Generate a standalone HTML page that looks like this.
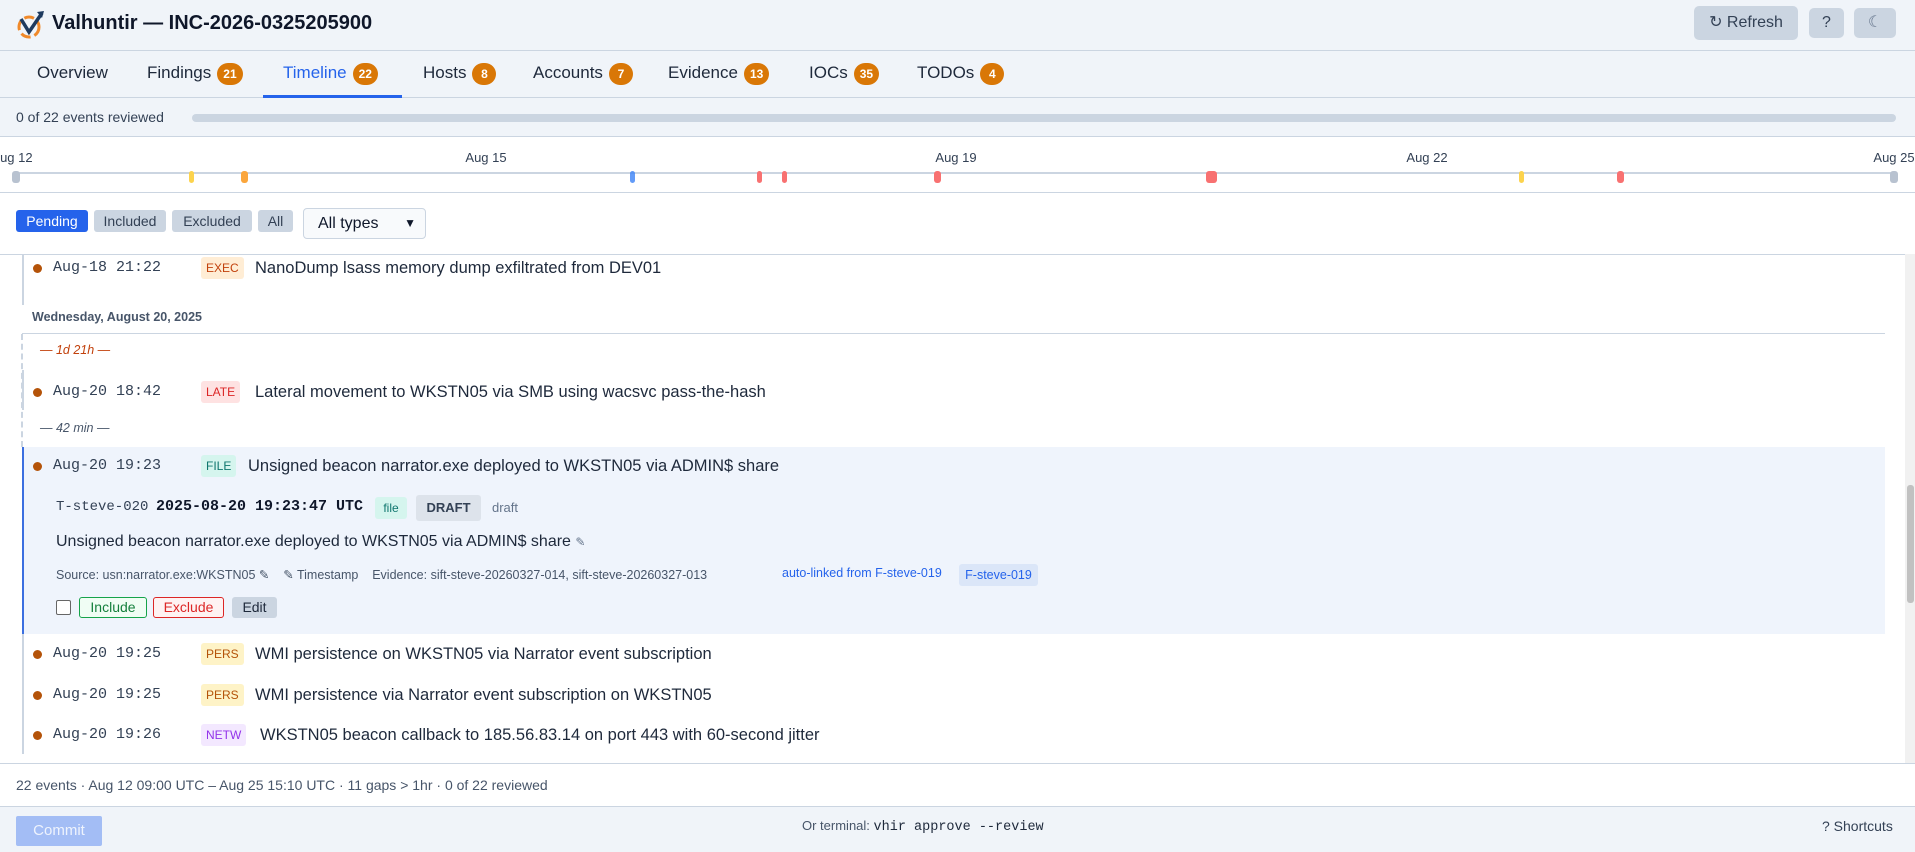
<!DOCTYPE html>
<html><head><meta charset="utf-8"><style>
*{box-sizing:border-box;margin:0;padding:0}
html,body{width:1915px;height:852px;overflow:hidden}
body{position:relative;background:#fff;font-family:"Liberation Sans",sans-serif;color:#1e293b}
.a{position:absolute;white-space:nowrap}
.a *,.row *{white-space:nowrap}
.mono{font-family:"Liberation Mono",monospace}
.badge{display:inline-block;background:#d97706;color:#fff;border-radius:11px;font-size:12px;font-weight:bold;min-width:24px;height:22px;line-height:22px;text-align:center;padding:0 6px;margin-left:6px;vertical-align:middle}
.tab{position:absolute;top:60px;font-size:17px;color:#1e293b;line-height:26px;white-space:nowrap}
.mk{position:absolute;top:171px;width:6px;height:12px;border-radius:3px}
.tl{position:absolute;top:150px;font-size:13px;color:#334155;transform:translateX(-50%);white-space:nowrap}
.fb{position:absolute;top:210px;height:22px;line-height:22px;font-size:14px;border-radius:3px;text-align:center;background:#cbd5e1;color:#334155}
.row{position:absolute;left:0;width:1880px;height:30px;line-height:30px;font-size:16.5px;white-space:nowrap}
.dot{position:absolute;left:33px;top:11px;width:9px;height:9px;border-radius:50%;background:#b45309}
.dt{position:absolute;left:53px;top:0;font-family:"Liberation Mono",monospace;font-size:15px;color:#334155}
.tg{position:absolute;top:4px;height:22px;line-height:22px;font-size:12px;padding:0 5px;border-radius:3px}
.tx{position:absolute;top:0;color:#1e293b}
</style></head><body>
<!-- header -->
<div class="a" style="left:0;top:0;width:1915px;height:51px;background:#f0f4f9;border-bottom:1px solid #cbd5e1"></div>
<svg class="a" style="left:15px;top:8px" width="32" height="32" viewBox="0 0 32 32">
<circle cx="14" cy="19" r="10" fill="none" stroke="#f0892a" stroke-width="3" stroke-dasharray="10 4"/>
<path d="M6 11 L14 24 L27 5" fill="none" stroke="#1e3a5f" stroke-width="3.5"/>
<path d="M22 4 L29 3 L27 10 Z" fill="#1e3a5f"/>
</svg>
<div class="a" style="left:52px;top:12px;font-size:20px;font-weight:bold;color:#0f172a">Valhuntir — INC-2026-0325205900</div>
<div class="a" style="left:1694px;top:6px;width:104px;height:34px;background:#cbd5e1;border-radius:5px;font-size:16px;line-height:34px;text-align:center;color:#334155">↻ Refresh</div>
<div class="a" style="left:1809px;top:8px;width:35px;height:30px;background:#cbd5e1;border-radius:5px;font-size:16px;line-height:30px;text-align:center;color:#334155">?</div>
<div class="a" style="left:1854px;top:8px;width:42px;height:30px;background:#cbd5e1;border-radius:5px;font-size:16px;line-height:30px;text-align:center;color:#64748b">☾</div>
<!-- tabs -->
<div class="a" style="left:0;top:51px;width:1915px;height:47px;background:#f0f4f9;border-bottom:1px solid #cbd5e1"></div>
<div class="tab" style="left:37px">Overview</div>
<div class="tab" style="left:147px">Findings<span class="badge">21</span></div>
<div class="tab" style="left:283px;color:#2563eb">Timeline<span class="badge">22</span></div>
<div class="a" style="left:263px;top:95px;width:139px;height:3px;background:#2563eb"></div>
<div class="tab" style="left:423px">Hosts<span class="badge">8</span></div>
<div class="tab" style="left:533px">Accounts<span class="badge">7</span></div>
<div class="tab" style="left:668px">Evidence<span class="badge">13</span></div>
<div class="tab" style="left:809px">IOCs<span class="badge">35</span></div>
<div class="tab" style="left:917px">TODOs<span class="badge">4</span></div>
<!-- progress -->
<div class="a" style="left:0;top:98px;width:1915px;height:39px;background:#f0f4f9;border-bottom:1px solid #cbd5e1"></div>
<div class="a" style="left:16px;top:109px;font-size:14px;color:#334155">0 of 22 events reviewed</div>
<div class="a" style="left:192px;top:114px;width:1704px;height:8px;background:#cbd5e1;border-radius:4px"></div>
<!-- timeline strip -->
<div class="a" style="left:0;top:192px;width:1915px;height:1px;background:#cbd5e1"></div>
<div class="tl" style="left:12px">Aug 12</div>
<div class="tl" style="left:486px">Aug 15</div>
<div class="tl" style="left:956px">Aug 19</div>
<div class="tl" style="left:1427px">Aug 22</div>
<div class="tl" style="left:1894px">Aug 25</div>
<div class="a" style="left:15px;top:172px;width:1880px;height:2px;background:#cbd5e1"></div>
<div class="mk" style="left:12px;width:8px;background:#b8c2d0"></div>
<div class="mk" style="left:189px;background:#fcd34d;width:5px"></div>
<div class="mk" style="left:241px;background:#fba63c;width:7px"></div>
<div class="mk" style="left:630px;background:#3b82f6;width:5px;opacity:.8"></div>
<div class="mk" style="left:757px;background:#f87171;width:5px"></div>
<div class="mk" style="left:782px;background:#f87171;width:5px"></div>
<div class="mk" style="left:934px;background:#f87171;width:7px"></div>
<div class="mk" style="left:1206px;background:#f87171;width:11px"></div>
<div class="mk" style="left:1519px;background:#fcd34d;width:5px"></div>
<div class="mk" style="left:1617px;background:#f87171;width:7px"></div>
<div class="mk" style="left:1890px;background:#b8c2d0;width:8px"></div>
<!-- filters -->
<div class="fb" style="left:16px;width:72px;background:#2563eb;color:#fff">Pending</div>
<div class="fb" style="left:94px;width:72px">Included</div>
<div class="fb" style="left:172px;width:80px">Excluded</div>
<div class="fb" style="left:258px;width:35px">All</div>
<div class="a" style="left:303px;top:208px;width:123px;height:31px;border:1px solid #cbd5e1;border-radius:4px;background:#f8fafc;font-size:16px;line-height:29px;padding-left:14px;color:#0f172a">All types<span style="position:absolute;right:9px;top:0;font-size:12px">&#9660;</span></div>
<div class="a" style="left:0;top:254px;width:1905px;height:1px;background:#cbd5e1"></div>
<!-- scrollbar -->
<div class="a" style="left:1905px;top:254px;width:10px;height:509px;background:#f1f1f1"></div>
<div class="a" style="left:1907px;top:485px;width:7px;height:118px;background:#c1c1c1;border-radius:3px"></div>
<!-- list -->
<div class="a" style="left:22px;top:255px;width:2px;height:50px;background:#cbd5e1"></div>
<div class="row" style="top:253px"><div class="dot"></div><div class="dt">Aug-18 21:22</div><div class="tg" style="left:201px;background:#ffedd5;color:#c2410c">EXEC</div><div class="tx" style="left:255px">NanoDump lsass memory dump exfiltrated from DEV01</div></div>
<div class="a" style="left:32px;top:310px;font-size:12.5px;font-weight:bold;color:#475569">Wednesday, August 20, 2025</div>
<div class="a" style="left:22px;top:333px;width:1863px;height:1px;background:#cbd5e1"></div>
<div class="a" style="left:21px;top:334px;width:0;height:113px;border-left:2px dashed #cbd5e1"></div>
<div class="a" style="left:22px;top:370px;width:2px;height:40px;background:#cbd5e1"></div>
<div class="a" style="left:40px;top:343px;font-size:12.5px;font-style:italic;color:#c2410c">— 1d 21h —</div>
<div class="row" style="top:377px"><div class="dot"></div><div class="dt">Aug-20 18:42</div><div class="tg" style="left:201px;background:#fee2e2;color:#dc2626">LATE</div><div class="tx" style="left:255px">Lateral movement to WKSTN05 via SMB using wacsvc pass-the-hash</div></div>
<div class="a" style="left:40px;top:421px;font-size:12.5px;font-style:italic;color:#475569">— 42 min —</div>
<!-- expanded -->
<div class="a" style="left:22px;top:447px;width:1863px;height:187px;background:#eff4fc;border-left:2px solid #3b6fe0"></div>
<div class="row" style="top:451px"><div class="dot"></div><div class="dt">Aug-20 19:23</div><div class="tg" style="left:201px;background:#d5f5ee;color:#0f766e">FILE</div><div class="tx" style="left:248px">Unsigned beacon narrator.exe deployed to WKSTN05 via ADMIN$ share</div></div>
<div class="a mono" style="left:56px;top:499px;font-size:14px;color:#334155">T-steve-020</div>
<div class="a mono" style="left:156px;top:498px;font-size:15px;font-weight:bold;color:#0f172a">2025-08-20 19:23:47 UTC</div>
<div class="a" style="left:375px;top:497px;width:32px;height:22px;line-height:22px;text-align:center;font-size:12px;background:#d5f5ee;color:#0f766e;border-radius:3px">file</div>
<div class="a" style="left:416px;top:495px;width:65px;height:26px;line-height:26px;text-align:center;font-size:13px;font-weight:bold;background:#dde3eb;color:#334155;border-radius:3px">DRAFT</div>
<div class="a" style="left:492px;top:500px;font-size:13px;color:#64748b">draft</div>
<div class="a" style="left:56px;top:533px;font-size:16px;color:#1e293b">Unsigned beacon narrator.exe deployed to WKSTN05 via ADMIN$ share <span style="font-size:12px;color:#64748b">✎</span></div>
<div class="a" style="left:56px;top:567px;font-size:12.5px;color:#475569">Source: usn:narrator.exe:WKSTN05 ✎ &nbsp;&nbsp; ✎ Timestamp &nbsp;&nbsp; Evidence: sift-steve-20260327-014, sift-steve-20260327-013</div>
<div class="a" style="left:782px;top:566px;font-size:12.5px;color:#2563eb">auto-linked from F-steve-019</div>
<div class="a" style="left:959px;top:564px;width:79px;height:22px;line-height:22px;text-align:center;font-size:12.5px;background:#dbe6f8;color:#2563eb;border-radius:3px">F-steve-019</div>
<div class="a" style="left:56px;top:600px;width:15px;height:15px;border:1px solid #666;border-radius:2px;background:#fff"></div>
<div class="a" style="left:79px;top:597px;width:68px;height:21px;line-height:19px;text-align:center;font-size:14px;border:1px solid #16a34a;color:#15803d;background:#f0fdf4;border-radius:3px">Include</div>
<div class="a" style="left:153px;top:597px;width:71px;height:21px;line-height:19px;text-align:center;font-size:14px;border:1px solid #dc2626;color:#dc2626;background:#fef2f2;border-radius:3px">Exclude</div>
<div class="a" style="left:232px;top:597px;width:45px;height:21px;line-height:21px;text-align:center;font-size:14px;background:#cbd5e1;color:#1e293b;border-radius:3px">Edit</div>
<div class="a" style="left:22px;top:634px;width:2px;height:120px;background:#cbd5e1"></div>
<div class="row" style="top:639px"><div class="dot"></div><div class="dt">Aug-20 19:25</div><div class="tg" style="left:201px;background:#fef3c7;color:#b45309">PERS</div><div class="tx" style="left:255px">WMI persistence on WKSTN05 via Narrator event subscription</div></div>
<div class="row" style="top:680px"><div class="dot"></div><div class="dt">Aug-20 19:25</div><div class="tg" style="left:201px;background:#fef3c7;color:#b45309">PERS</div><div class="tx" style="left:255px">WMI persistence via Narrator event subscription on WKSTN05</div></div>
<div class="row" style="top:720px"><div class="dot"></div><div class="dt">Aug-20 19:26</div><div class="tg" style="left:201px;background:#f3e8ff;color:#9333ea">NETW</div><div class="tx" style="left:260px">WKSTN05 beacon callback to 185.56.83.14 on port 443 with 60-second jitter</div></div>
<div class="a" style="left:0;top:763px;width:1915px;height:1px;background:#cbd5e1"></div>
<div class="a" style="left:16px;top:777px;font-size:14px;color:#475569">22 events · Aug 12 09:00 UTC – Aug 25 15:10 UTC · 11 gaps &gt; 1hr · 0 of 22 reviewed</div>
<!-- bottom -->
<div class="a" style="left:0;top:806px;width:1915px;height:46px;background:#f0f4f9;border-top:1px solid #cbd5e1"></div>
<div class="a" style="left:16px;top:816px;width:86px;height:30px;line-height:30px;text-align:center;font-size:15px;background:#a3bdf5;color:#eef3fd;border-radius:2px">Commit</div>
<div class="a" style="left:802px;top:818px;font-size:13px;color:#475569">Or terminal: <span class="mono" style="font-size:13.5px;color:#1e293b">vhir approve --review</span></div>
<div class="a" style="left:1822px;top:818px;font-size:14px;color:#334155">? Shortcuts</div>
</body></html>
